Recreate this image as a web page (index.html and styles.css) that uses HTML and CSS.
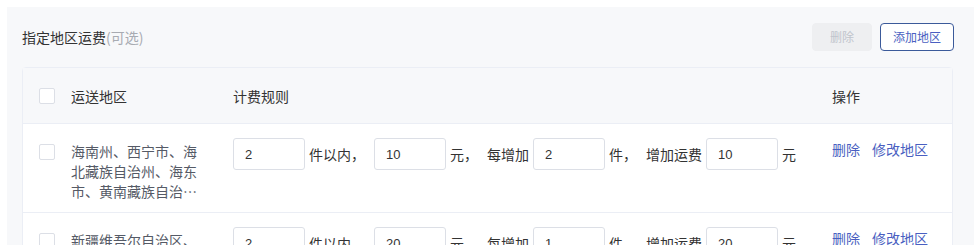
FILE: index.html
```html
<!DOCTYPE html>
<html lang="zh-CN">
<head>
<meta charset="utf-8">
<title>指定地区运费</title>
<link rel="stylesheet" href="styles.css">
</head>
<body>
<div class="page">
  <div class="panel">
    <div class="titlebar">
      <div class="title">指定地区运费<span class="opt">(可选)</span></div>
      <div class="btns">
        <button class="btn btn-disabled" disabled>删除</button>
        <button class="btn btn-outline">添加地区</button>
      </div>
    </div>
    <div class="table">
      <div class="row head">
        <div class="c-check"><span class="checkbox"></span></div>
        <div class="c-region">运送地区</div>
        <div class="c-rule">计费规则</div>
        <div class="c-act">操作</div>
      </div>
      <div class="row body">
        <div class="c-check"><span class="checkbox"></span></div>
        <div class="c-region"><div class="region-text">海南州、西宁市、海北藏族自治州、海东市、黄南藏族自治州、海西蒙古族藏族自治州、果洛藏族自治州</div></div>
        <div class="c-rule">
          <input class="num" value="2"><span class="unit sep">件以内，</span>
          <input class="num" value="10"><span class="unit sep">元，</span>
          <span class="unit">每增加</span><input class="num" value="2"><span class="unit sep">件，</span>
          <span class="unit">增加运费</span><input class="num" value="10"><span class="unit">元</span>
        </div>
        <div class="c-act"><a class="link" href="#">删除</a><a class="link" href="#">修改地区</a></div>
      </div>
      <div class="row body">
        <div class="c-check"><span class="checkbox"></span></div>
        <div class="c-region"><div class="region-text">新疆维吾尔自治区、西藏自治区、内蒙古自治区、宁夏回族自治区</div></div>
        <div class="c-rule">
          <input class="num" value="2"><span class="unit sep">件以内，</span>
          <input class="num" value="20"><span class="unit sep">元，</span>
          <span class="unit">每增加</span><input class="num" value="1"><span class="unit sep">件，</span>
          <span class="unit">增加运费</span><input class="num" value="20"><span class="unit">元</span>
        </div>
        <div class="c-act"><a class="link" href="#">删除</a><a class="link" href="#">修改地区</a></div>
      </div>
    </div>
  </div>
</div>
</body>
</html>
```
FILE: styles.css
```css
html, body {
  margin: 0;
  padding: 0;
  background: #ffffff;
  overflow: hidden;
}
body {
  font-family: "Noto Sans CJK SC", "Noto Sans", sans-serif;
  font-size: 14px;
  color: #333333;
}
.page {
  padding: 7px 0 0 7px;
}
.panel {
  background: #f7f8fa;
  padding: 0 21px 40px 15px;
}
.titlebar {
  height: 60px;
  display: flex;
  align-items: center;
  justify-content: space-between;
}
.title {
  font-size: 14px;
  line-height: 20px;
  color: #333;
}
.opt {
  color: #a8abb2;
}
.btns {
  display: flex;
  gap: 8px;
  margin-right: -1px;
}
.btn {
  height: 28px;
  font-family: "Noto Sans CJK SC", sans-serif;
  font-size: 12px;
  line-height: 26px;
  border-radius: 4px;
  padding: 0;
  box-sizing: border-box;
}
.btn-disabled {
  width: 60px;
  background: #eeeff1;
  border: 1px solid #eeeff1;
  color: #c0c4cc;
}
.btn-outline {
  width: 74px;
  background: #ffffff;
  border: 1px solid #3b5a9a;
  color: #4a5fc1;
}
.table {
  border: 1px solid #ebeef5;
  border-radius: 4px;
  background: #ffffff;
}
.row {
  display: grid;
  grid-template-columns: 48px 162px 599px 1fr;
}
.head {
  height: 55px;
  align-items: center;
  background: #f7f8fa;
  border-bottom: 1px solid #ebeef5;
  color: #333;
  line-height: 20px;
}
.body {
  border-bottom: 1px solid #ebeef5;
  align-items: start;
}
.c-check {
  padding-left: 16px;
  display: flex;
}
.checkbox {
  display: block;
  width: 14px;
  height: 14px;
  border: 1px solid #dcdfe6;
  border-radius: 2px;
  background: #ffffff;
}
.body .c-check {
  padding-top: 20px;
}
.body .c-region {
  padding: 17px 0 11px;
}
.region-text {
  width: 130px;
  line-height: 20px;
  color: #555a66;
  display: -webkit-box;
  -webkit-box-orient: vertical;
  -webkit-line-clamp: 3;
  overflow: hidden;
}
.body .c-rule {
  padding-top: 14px;
  display: flex;
  align-items: center;
  gap: 4px;
}
.num {
  width: 72px;
  height: 32px;
  box-sizing: border-box;
  border: 1px solid #dcdfe6;
  border-radius: 3px;
  padding: 0 0 0 11px;
  font-family: "Liberation Sans", Arial, sans-serif;
  font-size: 13px;
  color: #333;
  background: #fff;
  outline: none;
}
.unit {
  line-height: 20px;
  white-space: nowrap;
  color: #333;
}
.sep {
  margin-right: 5px;
}
.body .c-act {
  padding-top: 15px;
  line-height: 20px;
  display: flex;
  gap: 12px;
}
.link {
  color: #4a5fc1;
  text-decoration: none;
}
```
